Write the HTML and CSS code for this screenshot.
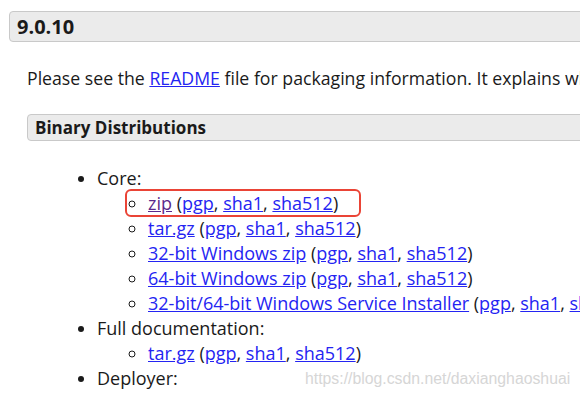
FILE: index.html
```html
<!DOCTYPE html>
<html>
<head>
<meta charset="utf-8">
<link rel="stylesheet" href="styles.css">
</head>
<body>
<div class="page">
  <h3 class="version">9.0.10</h3>
  <div class="content">
    <p class="intro">Please see the <a href="#">README</a> file for packaging information. It explains what every distribution contains.</p>
    <h4 class="subhead">Binary Distributions</h4>
    <ul class="dist">
      <li>Core:
        <ul>
          <li class="hl"><a href="#" class="visited">zip</a> (<a href="#">pgp</a>, <a href="#">sha1</a>, <a href="#">sha512</a>)</li>
          <li><a href="#">tar.gz</a> (<a href="#">pgp</a>, <a href="#">sha1</a>, <a href="#">sha512</a>)</li>
          <li><a href="#">32-bit Windows zip</a> (<a href="#">pgp</a>, <a href="#">sha1</a>, <a href="#">sha512</a>)</li>
          <li><a href="#">64-bit Windows zip</a> (<a href="#">pgp</a>, <a href="#">sha1</a>, <a href="#">sha512</a>)</li>
          <li><a href="#">32-bit/64-bit Windows Service Installer</a> (<a href="#">pgp</a>, <a href="#">sha1</a>, <a href="#">sha512</a>)</li>
        </ul>
      </li>
      <li>Full documentation:
        <ul>
          <li><a href="#">tar.gz</a> (<a href="#">pgp</a>, <a href="#">sha1</a>, <a href="#">sha512</a>)</li>
        </ul>
      </li>
      <li>Deployer:</li>
    </ul>
  </div>
  <div class="watermark">https://blog.csdn.net/daxianghaoshuai</div>
</div>
</body>
</html>
```

FILE: styles.css
```css
html, body {
  margin: 0;
  padding: 0;
  background: #fff;
  overflow: hidden;
}
.page {
  position: relative;
  width: 580px;
  height: 400px;
  overflow: hidden;
  font-family: "Open Sans", "DejaVu Sans", sans-serif;
  color: #1a1a1a;
}
.version {
  margin: 11px -20px 0 9px;
  height: 29px;
  padding: 0 0 0 7px;
  background: #ebebeb;
  border: 1px solid #c9c9c9;
  border-radius: 4px;
  font-size: 20px;
  font-weight: 700;
  line-height: 30px;
  color: #1a1a1a;
  white-space: nowrap;
}
.content {
  padding-left: 27px;
}
.intro {
  margin: 23px 0 0 0;
  font-size: 17.7px;
  line-height: 26px;
  white-space: nowrap;
}
a {
  color: #2424f2;
  text-decoration: underline;
}
a.visited {
  color: #5a2a8c;
}
.subhead {
  margin: 23px -20px 0 0;
  height: 25px;
  padding-left: 7px;
  background: #ebebeb;
  border: 1px solid #c9c9c9;
  border-radius: 4px;
  font-size: 17px;
  font-weight: 700;
  line-height: 26px;
  color: #1a1a1a;
}
.dist {
  margin: 25px 0 0 0;
  padding-left: 70px;
  font-size: 18px;
  line-height: 25px;
  white-space: nowrap;
}
.dist ul {
  margin: 0;
  padding-left: 51px;
  list-style-type: circle;
}
.dist li.hl {
  position: relative;
}
.dist li.hl::before {
  content: "";
  position: absolute;
  left: -23px;
  top: -2.5px;
  width: 232px;
  height: 24px;
  border: 2px solid #ea4436;
  border-radius: 6px;
}
.watermark {
  position: absolute;
  left: 305px;
  top: 370px;
  font-family: "Liberation Sans", Arial, sans-serif;
  font-size: 15.8px;
  color: #d6d6d6;
}
```
